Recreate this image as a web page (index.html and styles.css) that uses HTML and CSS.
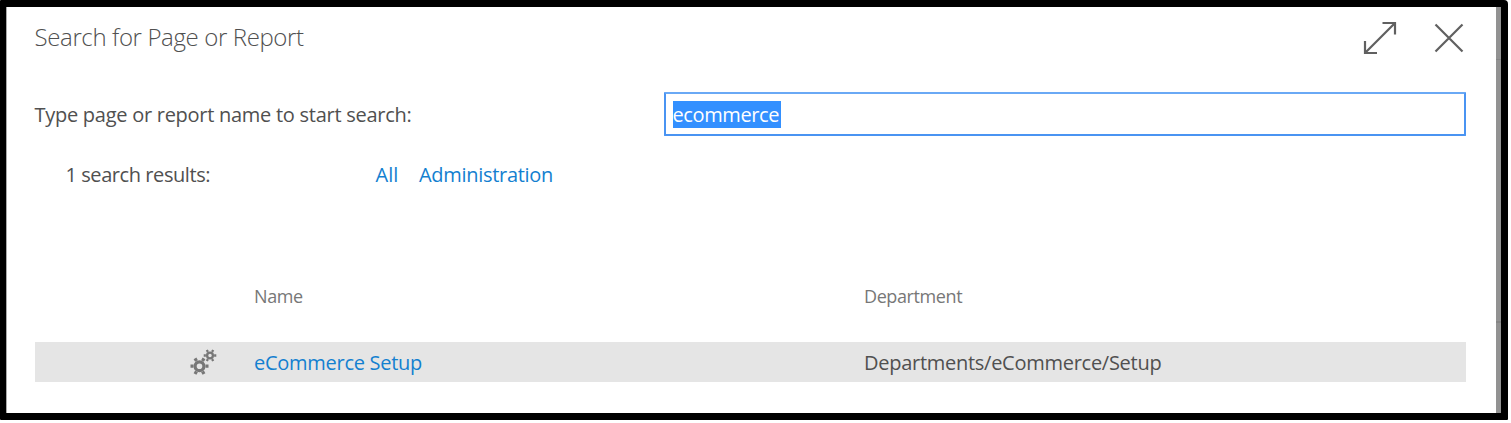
FILE: index.html
```html
<!DOCTYPE html>
<html lang="en">
<head>
<meta charset="utf-8">
<title>Search for Page or Report</title>
<link rel="stylesheet" href="styles.css">
</head>
<body>
<div class="frame">
  <main class="dialog">
    <header class="header">
      <h1 class="title"><span>Search for Page or Report</span></h1>
      <svg class="expand" width="34" height="34" viewBox="0 0 34 34"><path d="M2 32 32 2M19.500 2H32V13.500M2 20V32H14"/></svg>
      <svg class="close" width="30" height="30" viewBox="0 0 30 30"><path d="M1.500 1.500 28.500 28.500M28.500 1.500 1.500 28.500"/></svg>
    </header>
    <div class="search">
      <label class="prompt">Type page or report name to start search:</label>
      <div class="field"><span class="selected">ecommerce</span></div>
    </div>
    <nav class="filters">
      <span class="count">1 search results:</span>
      <a class="link all">All</a>
      <a class="link admin">Administration</a>
    </nav>
    <div class="row head">
      <span class="name-head">Name</span>
      <span class="dept-head">Department</span>
    </div>
    <div class="row result">
      <svg class="gears" width="28" height="28" viewBox="0 0 28 28">
        <g transform="translate(9.500 17.200)"><circle r="4.400"/><path d="M-9 0h3M6 0h3M-4.500-7.800l1.500 2.600M3 5.200l1.500 2.600M4.500-7.800 3-5.200M-3 5.200l-1.500 2.600"/></g>
        <g class="small" transform="translate(20 6.500)"><circle r="2.900"/><path d="M-6.300 0h2.200M4.100 0h2.200M-3.200-5.500l1.100 1.900M2.100 3.600l1.100 1.900M3.200-5.500 2.100-3.600M-2.100 3.600l-1.100 1.900"/></g>
      </svg>
      <a class="link name">eCommerce Setup</a>
      <span class="dept">Departments/eCommerce/Setup</span>
    </div>
  </main>
  <div class="backdrop"></div>
</div>
</body>
</html>
```
FILE: styles.css
```css
* { box-sizing: border-box; }
body { margin: 0; background: #fff; color: #505050; font: 20px/28px "Open Sans", "Noto Sans", sans-serif; white-space: nowrap; }
.frame { display: flex; width: 1508px; height: 420px; border: 7px solid #000; border-left-width: 6px; border-radius: 1px 4px 1px 1px; background: #000; }
.dialog { width: 1490px; height: 406px; background: #fff; border-left: 1px solid #aaa; padding: 0 30px 0 27.500px; }
.backdrop { width: 5px; background: linear-gradient(#858585, #858585) 0 52px / 5px 1px no-repeat, linear-gradient(#858585, #858585) 0 314px / 5px 2px no-repeat, #929292; }
.header { display: flex; height: 85px; padding-top: 14px; }
.title { flex: 1; margin: 0; font-size: 24px; font-weight: 300; line-height: 32px; letter-spacing: -0.37px; color: #505050; }
.expand, .close { fill: none; stroke: #606060; stroke-width: 2.2; }
.expand { margin-right: 1px; }
.close { margin: 2px 2px 0 36px; }
.search { display: flex; height: 44px; }
.prompt { width: 629px; padding-top: 9px; letter-spacing: -0.27px; }
.field { flex: 1; height: 44px; padding: 7px; border: 2px solid #4a94f2; border-top-color: #6aa9f5; border-radius: 1px; }
.selected { display: block; width: 108px; height: 27px; line-height: 27px; background: #3390ff; color: #fff; letter-spacing: -0.38px; }
.filters { display: flex; margin-top: 25px; padding-left: 31px; }
.count { width: 310px; letter-spacing: -0.43px; }
.all { width: 43.500px; letter-spacing: 0; }
.admin { letter-spacing: -0.3px; }
.link { color: #1380d0; }
.row { display: grid; grid-template-columns: 155.500px 64px 610px 1fr; }
.head { height: 60px; margin-top: 93px; font-size: 18px; line-height: 28px; letter-spacing: -0.4px; color: #777; }
.name-head, .name { grid-column: 3; }
.result { height: 40px; align-items: center; padding-top: 1px; background: #e5e5e5; letter-spacing: -0.27px; }
.gears { grid-column: 2; fill: none; stroke: #777; stroke-width: 3.2; }
.small { stroke-width: 2.300; }
```
